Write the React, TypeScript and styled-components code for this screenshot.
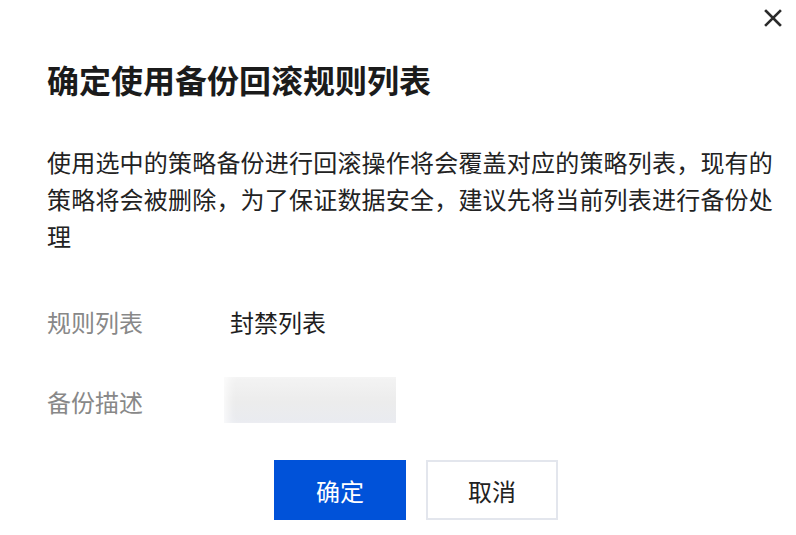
import React from 'react';
import styled, { createGlobalStyle } from 'styled-components';

const GlobalStyle = createGlobalStyle`
  html, body {
    margin: 0;
    padding: 0;
    background: #ffffff;
  }
  body {
    font-family: "Noto Sans CJK SC", "Noto Sans", sans-serif;
    color: #222222;
  }
`;

const rows = [
  { label: '规则列表', value: '封禁列表' },
  { label: '备份描述', value: '' }
];

const App = () => {
  return (
    <>
      <GlobalStyle />
      <Dialog>
        <CloseButton aria-label="关闭">
          <svg width="18" height="18" viewBox="0 0 18 18">
            <path d="M2 2 L16 16 M16 2 L2 16" stroke="#2b2b2b" strokeWidth="2.6" strokeLinecap="square" />
          </svg>
        </CloseButton>
        <Title>确定使用备份回滚规则列表</Title>
        <Description>
          使用选中的策略备份进行回滚操作将会覆盖对应的策略列表，现有的策略将会被删除，为了保证数据安全，建议先将当前列表进行备份处理
        </Description>
        <Form>
          {rows.map((row) => (
            <FormRow key={row.label}>
              <Label>{row.label}</Label>
              {row.value ? <Value>{row.value}</Value> : <BlurredInput />}
            </FormRow>
          ))}
        </Form>
        <Footer>
          <Button primary>确定</Button>
          <Button>取消</Button>
        </Footer>
      </Dialog>
    </>
  );
};

export default App;

const Dialog = styled.div`
  position: relative;
  width: 796px;
  height: 535px;
  box-sizing: border-box;
  padding: 55px 14px 0 47px;
  background: #ffffff;
`;

const CloseButton = styled.button`
  position: absolute;
  top: 9px;
  right: 14px;
  width: 18px;
  height: 18px;
  padding: 0;
  border: none;
  background: transparent;
  display: flex;
  align-items: center;
  justify-content: center;
  cursor: pointer;
`;

const Title = styled.h1`
  margin: 0;
  font-size: 32px;
  line-height: 48px;
  font-weight: 700;
  color: #1b1b1b;
`;

const Description = styled.p`
  margin: 40px 0 0;
  width: 735px;
  font-size: 24px;
  line-height: 37px;
  color: #222222;
  letter-spacing: 0.2px;
`;

const Form = styled.div`
  margin-top: 44px;
  display: flex;
  flex-direction: column;
  gap: 34px;
`;

const FormRow = styled.div`
  display: flex;
  align-items: center;
  height: 46px;
`;

const Label = styled.div`
  width: 183px;
  font-size: 24px;
  color: #888888;
`;

const Value = styled.div`
  font-size: 24px;
  color: #1e1e1e;
`;

const BlurredInput = styled.div`
  width: 172px;
  height: 46px;
  margin-left: -6px;
  margin-top: -2px;
  background: linear-gradient(180deg, #f3f3f3 0%, #ececec 55%, #e9ebf0 100%);
  box-shadow: inset 8px 0 10px -4px rgba(255, 255, 255, 0.8);
`;

const Footer = styled.div`
  margin-top: 36px;
  display: flex;
  gap: 20px;
  padding-left: 227px;
`;

const Button = styled.button<{ primary?: boolean }>`
  width: 132px;
  height: 60px;
  box-sizing: border-box;
  font-family: "Noto Sans CJK SC", "Noto Sans", sans-serif;
  font-size: 24px;
  border: 2px solid ${(p) => (p.primary ? '#0052d9' : '#e3e6ed')};
  background: ${(p) => (p.primary ? '#0052d9' : '#ffffff')};
  color: ${(p) => (p.primary ? '#ffffff' : '#222222')};
  cursor: pointer;
  padding: 0;
`;
